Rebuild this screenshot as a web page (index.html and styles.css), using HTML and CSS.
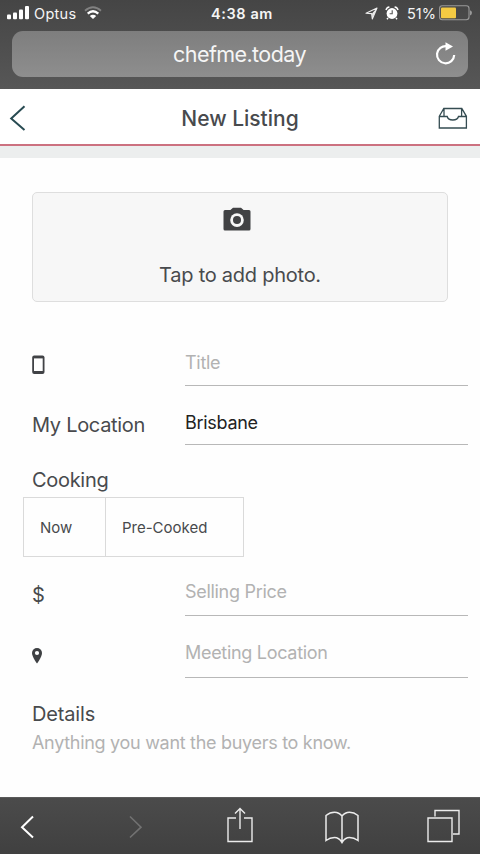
FILE: index.html
```html
<!DOCTYPE html>
<html lang="en">
<head>
<meta charset="utf-8">
<title>New Listing</title>
<link rel="stylesheet" href="styles.css">
</head>
<body>
<div class="browser-top">
  <div class="status">
    <div class="carrier">
      <svg width="22" height="14" viewBox="0 0 22 14" fill="#fff"><rect x="0" y="8.6" width="4" height="4.6" rx="1"/><rect x="6" y="6.5" width="4" height="6.7" rx="1"/><rect x="12" y="3.5" width="4" height="9.7" rx="1"/><rect x="18" y="0" width="4" height="13.2" rx="1"/></svg>
      <span class="optus">Optus</span>
      <svg class="wifi" width="18" height="14" viewBox="0 0 18 14" fill="none"><path d="M1 4.7Q9-2.3 17 4.7" stroke="#818181" stroke-width="1.8"/><path d="M3.7 7.6Q9 3 14.3 7.6" stroke="#fff" stroke-width="2.4"/><path d="M9 13 5.8 9.9Q9 7.4 12.2 9.9Z" fill="#fff"/></svg>
    </div>
    <strong class="time">4:38 am</strong>
    <div class="battery">
      <svg class="arrow" width="13" height="13" viewBox="0 0 13 13" fill="none" stroke="#eee" stroke-width="1.1" stroke-linejoin="round"><path d="M1 6.2 12 1 7.3 12 6.6 6.6Z"/><path d="M7 6.4 12 1 7.4 11Z" fill="#eee" stroke="none"/></svg>
      <svg class="alarm" width="14" height="14" viewBox="0 0 14 14"><circle cx="7" cy="7.5" r="5.4" fill="#fff"/><path d="M1 4Q1.7 1.3 4.4 1M13 4Q12.3 1.3 9.6 1M3 12 2 13.2M11 12l1 1.2" fill="none" stroke="#fff" stroke-width="1.5"/><path d="M7.2 4.3v3.4H4.6" fill="none" stroke="#555" stroke-width="1.1"/></svg>
      <span class="percent">51%</span>
      <svg width="33" height="16" viewBox="0 0 33 16"><rect x=".6" y=".8" width="29.4" height="14" rx="2.7" fill="none" stroke="#999" stroke-width="1.1"/><rect x="2" y="2.4" width="15" height="10.8" rx="1" fill="#f4ca43"/><path d="M31 5.2q2 .6 2 2.6t-2 2.6z" fill="#999"/></svg>
    </div>
  </div>
  <div class="address">
    <span class="url">chefme.today</span>
    <svg class="reload" width="22" height="24" viewBox="0 0 22 24"><path d="M12 4.2A8.6 8.6 0 1 0 19.2 13" fill="none" stroke="#fff" stroke-width="2.2"/><path d="M10.5.2 18 4.6 10.5 8.8Z" fill="#fff"/></svg>
  </div>
</div>
<header class="app-header">
  <svg class="back" width="18" height="28" viewBox="0 0 18 28" fill="none" stroke="#284b52" stroke-width="2"><path d="M15.5 2.2 2.2 14.5 15.5 26"/></svg>
  <h1 class="heading">New Listing</h1>
  <svg class="inbox" width="30" height="23" viewBox="0 0 30 23" fill="none" stroke="#354c52" stroke-width="1.3"><path d="M1.3 9.3 5.8 1.5H23.8L28.4 9.3V21H1.3ZM1.3 9.5H9.2Q10 13 14.8 13T20.5 9.5H28.4M6 1.7V9.2M23.6 1.7V9.2"/></svg>
</header>
<div class="band"></div>
<main class="form">
  <div class="photo">
    <svg class="camera" width="28" height="25" viewBox="0 0 28 25"><path d="M2 3H7.4L10 .8H18L20.6 3H26Q27.5 3 27.5 4.5V22Q27.5 23.5 26 23.5H2Q.5 23.5.5 22V4.5Q.5 3 2 3Z" fill="#414244"/><circle cx="14" cy="13.1" r="6.8" fill="#f7f7f7"/><circle cx="14" cy="13.1" r="4" fill="#414244"/></svg>
    <span class="tap">Tap to add photo.</span>
  </div>
  <div class="row row-title">
    <div class="label"><svg width="13" height="20" viewBox="0 0 13 20"><rect width="12.3" height="18.5" x=".2" y=".5" rx="2" fill="#414346"/><rect x="2" y="3.4" width="8.7" height="12.6" fill="#fff"/></svg></div>
    <div class="field"><span>Title</span></div>
  </div>
  <div class="row row-location">
    <div class="label"><span>My Location</span></div>
    <div class="field filled"><span>Brisbane</span></div>
  </div>
  <div class="group"><span>Cooking</span></div>
  <div class="options">
    <div class="option now"><span>Now</span></div>
    <div class="option pre"><span>Pre-Cooked</span></div>
  </div>
  <div class="row row-price">
    <div class="label dollar"><span>$</span></div>
    <div class="field"><span>Selling Price</span></div>
  </div>
  <div class="row row-meeting">
    <div class="label"><svg width="11" height="16" viewBox="0 0 11 16"><path d="M5 0A5 5 0 0 0 0 5C0 9 5 15.5 5 15.5S10 9 10 5A5 5 0 0 0 5 0Z" fill="#3e4043"/><circle cx="5" cy="5" r="2.1" fill="#fff"/></svg></div>
    <div class="field"><span>Meeting Location</span></div>
  </div>
  <div class="details"><span>Details</span></div>
  <div class="hint"><span>Anything you want the buyers to know.</span></div>
</main>
<nav class="toolbar">
  <svg class="prev" width="15" height="24" viewBox="0 0 15 24" fill="none" stroke="#fff" stroke-width="2"><path d="M13 1.5 2 12.2 13 22.5"/></svg>
  <svg class="next" width="15" height="24" viewBox="0 0 15 24" fill="none" stroke="#727272" stroke-width="1.6"><path d="M2 1.5 13 12.2 2 22.5"/></svg>
  <svg class="share" width="26" height="36" viewBox="0 0 26 36" fill="none" stroke="#ececec" stroke-width="1.4"><path d="M9 11H1V34.5H25V11H17M13 22V1.5M8 6.5 13 1.5 18 6.5"/></svg>
  <svg class="book" width="34" height="33" viewBox="0 0 34 33" fill="none" stroke="#ececec" stroke-width="1.5"><path d="M17 5Q14 1.2 9.5 1.2T1 4.5V29.5Q5 26.5 9.5 26.5T17 31.5Q20 26.5 24.5 26.5T33 29.5V4.5Q29 1.2 24.5 1.2T17 5V31.5"/></svg>
  <svg class="tabs" width="33" height="34" viewBox="0 0 33 34" fill="none" stroke="#ececec" stroke-width="1.4"><path d="M1 9H25V32.5H1ZM8 7.5V1.5H32V25H26"/></svg>
</nav>
</body>
</html>
```
FILE: styles.css
```css
* { box-sizing: border-box; }
body {
  margin: 0;
  width: 480px;
  height: 854px;
  display: flex;
  flex-direction: column;
  overflow: hidden;
  background: #fefefe;
  color: #484a4d;
  font-family: Inter, "Liberation Sans", sans-serif;
  font-size: 20px;
  letter-spacing: -.3px;
}
svg { display: block; flex: none; }
span { white-space: nowrap; }

.browser-top {
  height: 89px;
  padding: 0 12px;
  background: linear-gradient(#454545, #575757);
  color: #f5f5f5;
}
.status {
  height: 31px;
  display: grid;
  grid-template-columns: 1fr auto 1fr;
  align-items: center;
  margin: 0 -4px 0 -5px;
  padding-bottom: 5px;
  font-size: 14.5px;
  letter-spacing: 0;
}
.carrier, .battery { display: flex; align-items: center; }
.battery { justify-content: flex-end; }
.optus { margin-left: 5px; letter-spacing: .3px; }
.wifi { margin-left: 8px; }
.time { font-weight: 600; letter-spacing: .6px; margin-left: 5px; }
.arrow { margin-right: 7px; }
.percent { margin: 0 3px 0 8px; }
.address {
  height: 46px;
  border-radius: 11px;
  background: linear-gradient(#7e7e7e, #8e8e8e);
  display: flex;
  align-items: center;
  justify-content: flex-end;
  padding-right: 11px;
}
.url { flex: 1; text-align: center; padding-left: 32px; font-size: 21.5px; letter-spacing: -.58px; }

.app-header {
  height: 57px;
  display: flex;
  align-items: center;
  justify-content: space-between;
  padding: 3px 12px 0 9px;
  border-bottom: 2px solid #cc7180;
  background: #fff;
}
.heading { margin: 0 0 0 15px; font-size: 21px; font-weight: 450; letter-spacing: 0; }
.band { height: 12px; background: #eceeee; }

.form { flex: 1; padding: 34px 12px 0 32px; }
.photo {
  height: 110px;
  width: 416px;
  border: 1.5px solid #dedede;
  border-radius: 5px;
  background: #f7f7f7;
  display: flex;
  flex-direction: column;
  align-items: center;
  padding-top: 14px;
}
.camera { margin-right: 7px; }
.tap { margin-top: 28px; line-height: 30px; letter-spacing: -.25px; }
.row { display: grid; grid-template-columns: 153px 283px; }
.label { display: flex; align-items: center; }
.field {
  border-bottom: 1.5px solid #b8b8b8;
  color: #b2b2b2;
  font-size: 18px;
  display: flex;
  align-items: center;
}
.filled { color: #222; }
.row-title { height: 48px; margin-top: 36px; }
.row-title .label { padding-top: 6px; }
.row-title .field { padding-top: 1px; }
.row-location { height: 59px; }
.row-location .label { padding-top: 18px; }
.row-location .field { padding-top: 14px; }
.group { height: 52px; padding-top: 20px; line-height: 30px; }
.options { display: flex; margin-left: -9px; width: 221px; height: 60px; border: 1px solid #dadada; font-size: 15px; letter-spacing: 0; }
.option { display: flex; align-items: center; padding-left: 16px; }
.now { width: 82px; border-right: 1px solid #dadada; }
.row-price { height: 59px; }
.row-price .label { padding-top: 17px; }
.row-price .field { padding-top: 10px; }
.row-meeting { height: 62px; }
.row-meeting .label { padding-top: 17px; }
.row-meeting .field { padding-top: 12px; }
.details { margin-top: 21px; line-height: 30px; letter-spacing: -.15px; }
.hint { color: #b2b2b2; font-size: 18px; line-height: 28px; }

.toolbar {
  height: 57px;
  flex: none;
  display: flex;
  align-items: center;
  padding-left: 20px;
  background: linear-gradient(#4b4b4b, #404040);
  border-top: 1px solid #5a5a5a;
}
.prev { margin-top: 2px; }
.next { margin: 2px 0 0 93px; }
.share { margin-left: 84px; margin-bottom: 2px; }
.book { margin-left: 72px; margin-top: 2px; }
.tabs { margin-left: 68px; }
```
